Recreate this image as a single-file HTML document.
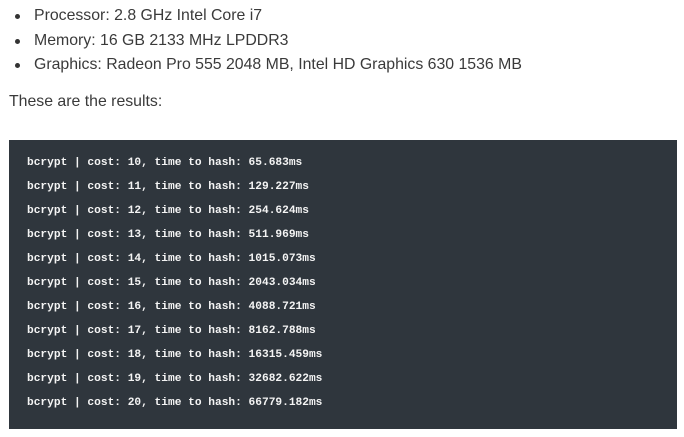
<!DOCTYPE html>
<html><head><style>
body{margin:0;background:#fff;width:684px;height:437px;overflow:hidden;font-family:"Liberation Sans",sans-serif;color:#3a3a3a}
ul{margin:0;padding:0;position:absolute;left:0;top:4px;list-style:none}
li{position:relative;padding-left:34px;font-size:15.85px;line-height:24.5px;height:24.5px}
li:before{content:"";position:absolute;left:15px;top:10px;width:5px;height:5px;border-radius:50%;background:#333}
p{position:absolute;left:9px;top:93px;margin:0;font-size:15.85px}
.code{position:absolute;left:9px;top:140px;width:668px;height:289px;background:#2f363d}
.code div{position:absolute;left:18px;font-family:"Liberation Mono",monospace;font-weight:bold;font-size:11.2px;color:#f4f4f4;white-space:pre}
</style></head><body>
<ul>
<li>Processor: 2.8 GHz Intel Core i7</li>
<li>Memory: 16 GB 2133 MHz LPDDR3</li>
<li>Graphics: Radeon Pro 555 2048 MB, Intel HD Graphics 630 1536 MB</li>
</ul>
<p>These are the results:</p>
<div class="code">
<div style="top:17px">bcrypt | cost: 10, time to hash: 65.683ms</div>
<div style="top:41px">bcrypt | cost: 11, time to hash: 129.227ms</div>
<div style="top:65px">bcrypt | cost: 12, time to hash: 254.624ms</div>
<div style="top:89px">bcrypt | cost: 13, time to hash: 511.969ms</div>
<div style="top:113px">bcrypt | cost: 14, time to hash: 1015.073ms</div>
<div style="top:137px">bcrypt | cost: 15, time to hash: 2043.034ms</div>
<div style="top:161px">bcrypt | cost: 16, time to hash: 4088.721ms</div>
<div style="top:185px">bcrypt | cost: 17, time to hash: 8162.788ms</div>
<div style="top:209px">bcrypt | cost: 18, time to hash: 16315.459ms</div>
<div style="top:233px">bcrypt | cost: 19, time to hash: 32682.622ms</div>
<div style="top:257px">bcrypt | cost: 20, time to hash: 66779.182ms</div>
</div>
</body></html>
